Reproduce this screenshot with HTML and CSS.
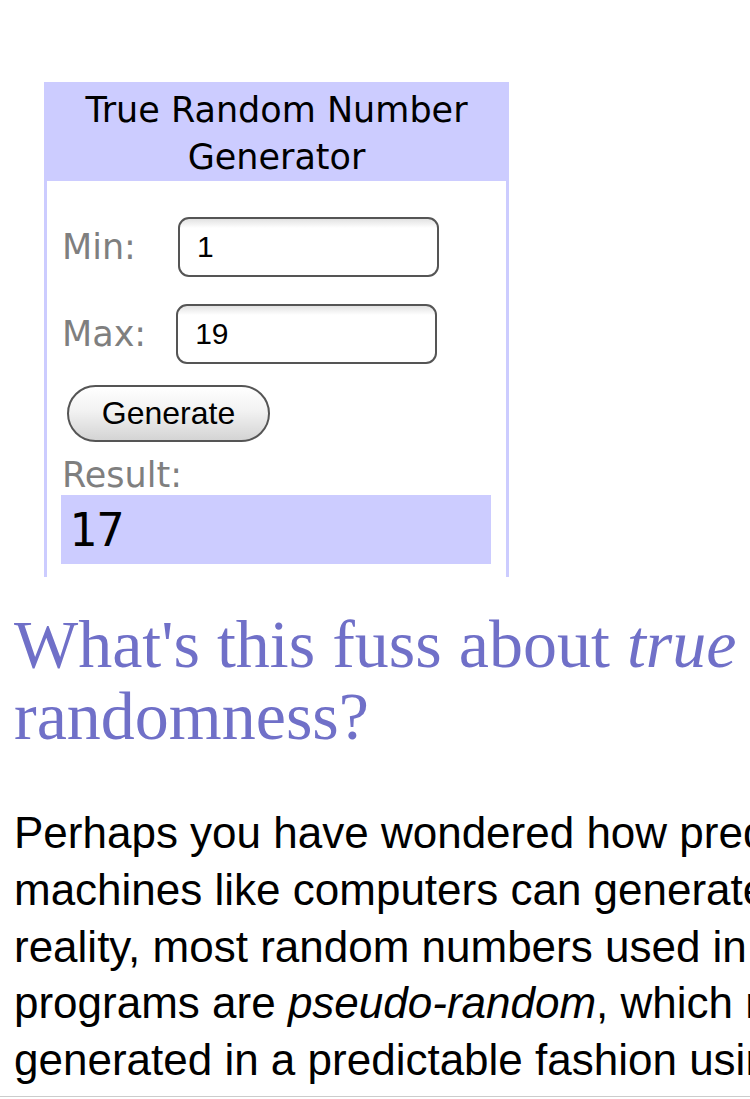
FILE: index.html
```html
<!DOCTYPE html>
<html>
<head>
<meta charset="utf-8">
<link rel="stylesheet" href="styles.css">
</head>
<body>
<div class="widget">
  <div class="widget-head">True Random Number<br>Generator</div>
  <div class="widget-body">
    <div class="row">
      <span class="lbl">Min:</span>
      <div class="field field-min">1</div>
    </div>
    <div class="row row-max">
      <span class="lbl">Max:</span>
      <div class="field field-max">19</div>
    </div>
    <div class="btn">Generate</div>
    <div class="lbl result-lbl">Result:</div>
    <div class="result">17</div>
  </div>
</div>
<h2 class="title">What's this fuss about <em>true</em><br>randomness?</h2>
<p class="text">Perhaps you have wondered how predictable<br>machines like computers can generate randomness. In<br>reality, most random numbers used in computer<br>programs are <em>pseudo-random</em>, which means they are<br>generated in a predictable fashion using a mathematical</p>
<div class="bottom-bar"></div>
</body>
</html>
```
FILE: styles.css
```css
html, body {
  margin: 0;
  padding: 0;
  overflow: hidden;
  background: #fff;
}
body {
  width: 750px;
  height: 1099px;
}
.widget {
  margin: 82px 0 0 44px;
  width: 465px;
  font-family: "DejaVu Sans", Verdana, sans-serif;
}
.widget-head {
  background: #ccccff;
  text-align: center;
  font-size: 35px;
  line-height: 47px;
  padding-top: 5px;
  height: 94px;
  color: #000;
}
.widget-body {
  border-left: 3px solid #ccccff;
  border-right: 3px solid #ccccff;
  padding: 36px 0 13px 15px;
}
.row {
  display: flex;
  align-items: center;
  height: 60px;
}
.row-max {
  margin-top: 27px;
}
.lbl {
  font-size: 35px;
  color: #7f7f7f;
  line-height: 40px;
}
.field {
  box-sizing: border-box;
  height: 60px;
  width: 261px;
  border: 2px solid #555;
  border-radius: 11px;
  background: linear-gradient(#e2e2e2 0px, #fff 9px, #fff 100%);
  font-family: "Liberation Sans", Arial, sans-serif;
  font-size: 30px;
  line-height: 56px;
  padding-left: 17px;
  color: #000;
}
.field-min { margin-left: 42px; }
.field-max { margin-left: 30px; }
.btn {
  box-sizing: border-box;
  margin: 21px 0 0 5px;
  width: 203px;
  height: 57px;
  border: 2px solid #555;
  border-radius: 29px;
  background: linear-gradient(#ffffff, #f2f2f2 45%, #d4d4d4);
  font-family: "Liberation Sans", Arial, sans-serif;
  font-size: 32px;
  line-height: 53px;
  text-align: center;
  color: #000;
}
.result-lbl {
  margin-top: 13px;
}
.result {
  margin-left: -1px;
  width: 422px;
  height: 67px;
  padding: 2px 0 0 8px;
  background: #ccccff;
  font-family: "DejaVu Sans Mono", monospace;
  font-size: 46px;
  line-height: 67px;
  color: #000;
}
.title {
  margin: 31px 0 0 14px;
  font-family: "Liberation Serif", "Times New Roman", serif;
  font-weight: normal;
  font-size: 68px;
  line-height: 72px;
  color: #7070c8;
  white-space: nowrap;
}
.title em { font-style: italic; }
.text {
  margin: 53px 0 0 14px;
  font-family: "Liberation Sans", Arial, sans-serif;
  font-size: 44px;
  line-height: 56.75px;
  color: #000;
  white-space: nowrap;
}
.bottom-bar {
  position: fixed;
  left: 0;
  right: 0;
  bottom: 0;
  height: 2px;
  border-top: 1px solid #cccccc;
  background: #fff;
}
```
